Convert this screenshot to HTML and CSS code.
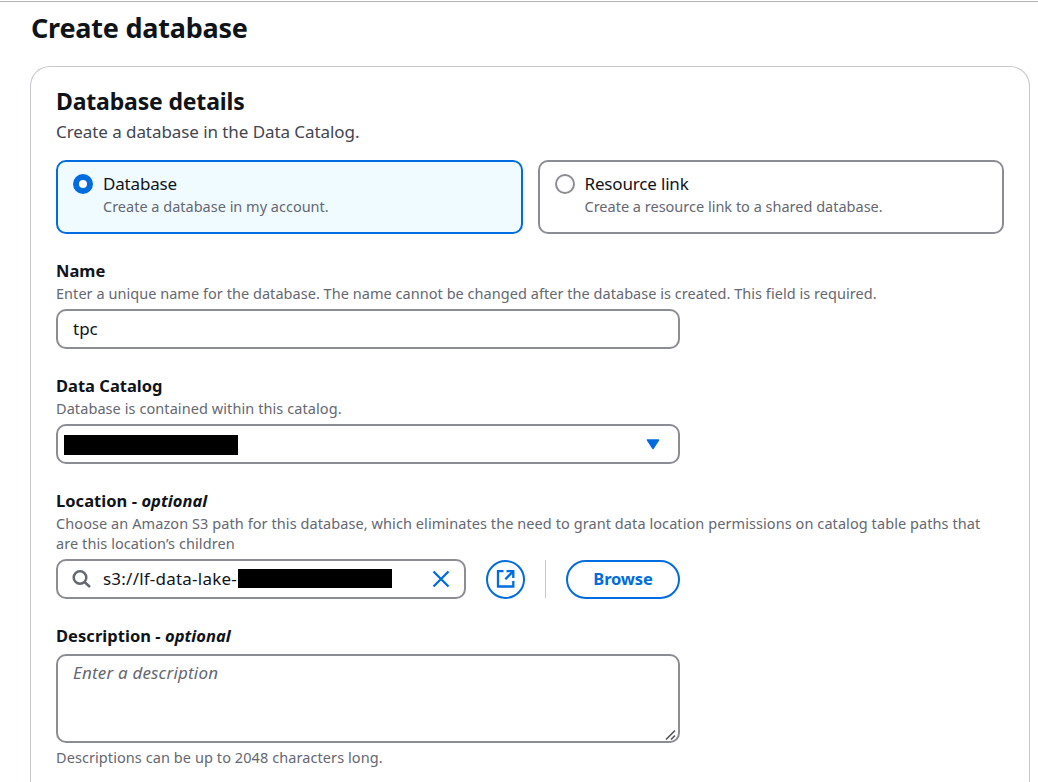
FILE: index.html
```
<!DOCTYPE html>
<html lang="en">
<head>
<meta charset="utf-8">
<title>Create database</title>
<link rel="stylesheet" href="styles.css">
</head>
<body>
<main class="page">
  <h1 class="page-title">Create database</h1>
  <section class="card">
    <h2 class="card-title">Database details</h2>
    <p class="card-subtitle">Create a database in the Data Catalog.</p>
    <div class="tiles">
      <div class="tile tile-selected">
        <span class="radio radio-checked"></span>
        <div>
          <div class="tile-label">Database</div>
          <div class="hint">Create a database in my account.</div>
        </div>
      </div>
      <div class="tile">
        <span class="radio"></span>
        <div>
          <div class="tile-label">Resource link</div>
          <div class="hint">Create a resource link to a shared database.</div>
        </div>
      </div>
    </div>

    <div class="field">
      <div class="label">Name</div>
      <div class="hint hint-name">Enter a unique name for the database. The name cannot be changed after the database is created. This field is required.</div>
      <div class="control narrow">tpc</div>
    </div>

    <div class="field">
      <div class="label">Data Catalog</div>
      <div class="hint hint-wide">Database is contained within this catalog.</div>
      <div class="control narrow select">
        <span class="redacted redacted-catalog"></span>
        <svg class="caret" width="14" height="11" viewBox="0 0 14 11"><path d="M1.500 1h11L7 9.500z" fill="#006ce0" stroke="#006ce0" stroke-width="1.500" stroke-linejoin="round"/></svg>
      </div>
    </div>

    <div class="field">
      <div class="label label-optional">Location - <i>optional</i></div>
      <div class="hint hint-wide">Choose an Amazon S3 path for this database, which eliminates the need to grant data location permissions on catalog table paths that<br>are this location’s children</div>
      <div class="location-row narrow">
        <div class="control search">
          <svg class="search-icon" width="20" height="20" viewBox="0 0 20 20" fill="none" stroke="#656871" stroke-width="2.500"><circle cx="8" cy="8.500" r="6.300"/><path d="M12.500 13l5.500 5"/></svg>
          <span class="path">s3://lf-data-lake-</span>
          <span class="redacted redacted-path"></span>
          <svg class="clear" width="18" height="18" viewBox="0 0 18 18" fill="none" stroke="#006ce0" stroke-width="2.300"><path d="M1.500 1.500l15 15M16.500 1.500l-15 15"/></svg>
        </div>
        <div class="round-button">
          <svg width="20" height="20" viewBox="0 0 20 20" fill="none" stroke="#006ce0" stroke-width="2.300"><path d="M7.500 2.200H2v15.300h15.300V12M10.500 2.200h6.800V9M17.300 2.200L9.300 10.200"/></svg>
        </div>
        <div class="divider"></div>
        <div class="browse">Browse</div>
      </div>
    </div>

    <div class="field">
      <div class="label label-optional">Description - <i>optional</i></div>
      <div class="control narrow textarea">
        Enter a description
        <svg class="grip" width="12" height="12" viewBox="0 0 12 12" fill="none" stroke="#55575d" stroke-width="1.700"><path d="M1 10.500L10 1.500M6 10.500L10 6.500"/></svg>
      </div>
      <div class="hint hint-wide after">Descriptions can be up to 2048 characters long.</div>
    </div>
  </section>
</main>
</body>
</html>
```
FILE: styles.css
```
* { box-sizing: border-box; }
body {
  margin: 0;
  background: #fff;
  color: #0f141a;
  font-family: "Noto Sans", sans-serif;
  font-size: 17px;
  line-height: 25px;
}
.page { margin-top: 1px; border-top: 1px solid #b4b4bb; padding: 8px 8px 0 30px; }
.page-title, .card-title, .card-subtitle { margin: 0; white-space: nowrap; }
.page-title { font-size: 27px; line-height: 36px; font-weight: 700; padding-left: 1px; letter-spacing: -0.22px; }
.card {
  margin-top: 20px;
  height: 716px;
  border: 1px solid #c6c6cd;
  border-bottom: 0;
  border-radius: 20px 20px 0 0;
  padding: 19px 25px 0;
}
.card-title { font-size: 23px; line-height: 30px; letter-spacing: -0.17px; }
.card-subtitle { margin-top: 3px; color: #424650; letter-spacing: -0.07px; }
.tiles { margin-top: 16px; display: grid; grid-template-columns: 1fr 1fr; gap: 15px; }
.tile {
  display: flex;
  gap: 10px;
  height: 74px;
  border: 2px solid #8c8c94;
  border-radius: 10px;
  padding: 9px 15px 0;
}
.tile-label { letter-spacing: -0.17px; }
.tile-selected { border-color: #006ce0; background: #f0fbff; }
.radio { flex: none; width: 20px; height: 20px; margin-top: 3px; border: 2px solid #8c8c94; border-radius: 50%; background: #fff; }
.radio-checked { border: 6px solid #006ce0; }
.hint { color: #656871; font-size: 14.5px; line-height: 20px; white-space: nowrap; }
.hint-name { letter-spacing: 0.04px; }
.hint-wide { letter-spacing: 0.077px; }
.hint.after { margin-top: 4px; }
.field { padding-top: 24px; margin-bottom: 0; }
.field + .field { padding-top: 24px; }
.label { font-weight: 700; white-space: nowrap; font-size: 16.5px; }
.label-optional { letter-spacing: 0.04px; }
.narrow { width: 624px; }
.control {
  display: flex;
  align-items: center;
  height: 40px;
  margin-top: 6px;
  border: 2px solid #8c8c94;
  border-radius: 10px;
  padding: 0 15px 2px;
  background: #fff;
}
.redacted { background: #000; flex: none; }
.redacted-catalog { width: 174px; height: 20px; margin-top: 2px; }
.select { padding: 0 18px 0 6px; justify-content: space-between; }
.location-row { display: flex; align-items: center; margin-top: 6px; }
.search { width: 410px; margin-top: 0; padding: 0 14px; }
.search-icon { flex: none; margin-right: 11px; }
.path { width: 135px; margin-top: -2px; white-space: nowrap; letter-spacing: 0.22px; }
.redacted-path { width: 154px; height: 19px; margin-top: -1px; }
.clear { flex: none; margin-left: auto; }
.round-button {
  display: flex;
  align-items: center;
  justify-content: center;
  width: 39px;
  height: 39px;
  margin-left: 20px;
  border: 2px solid #006ce0;
  border-radius: 50%;
}
.divider { width: 1px; height: 38px; margin: 0 20px; background: #c6c6cd; }
.browse {
  flex: 1;
  height: 39px;
  border: 2px solid #006ce0;
  border-radius: 20px;
  color: #006ce0;
  font-size: 16.5px;
  font-weight: 700;
  letter-spacing: -0.15px;
  text-align: center;
  line-height: 34px;
}
.textarea { position: relative; height: 89px; align-items: flex-start; padding-top: 4px; font-style: italic; color: #656871; letter-spacing: 0.18px; }
.grip { position: absolute; right: 1px; bottom: 0; }
```
